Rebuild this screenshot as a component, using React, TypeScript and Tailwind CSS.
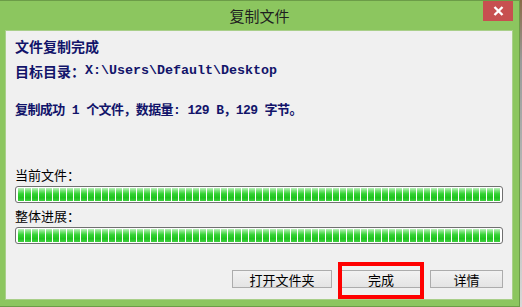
import React from "react";

const cjk = "font-['Noto_Sans_CJK_SC','Noto_Sans',sans-serif]";
const mono = "font-['Liberation_Mono','Noto_Sans_CJK_SC',monospace]";

function Bar() {
  return (
    <div className="w-[488px] h-[17px] border border-[#707070] rounded-[3px] bg-white px-[2px] py-[1px]">
      <div className="h-full w-full bg-[image:repeating-linear-gradient(to_right,transparent_0px,transparent_6px,#ffffff_6px,#ffffff_7px),linear-gradient(to_bottom,#bdf2bd_0%,#76e276_22%,#33d233_45%,#1fc41f_75%,#41cf41_100%)]" />
    </div>
  );
}

function Btn({ label, w }: { label: string; w: string }) {
  return (
    <div
      className={`${w} h-[18px] border border-[#acacac] bg-[linear-gradient(to_bottom,#f2f2f2,#e4e4e4)] flex items-center justify-center text-[13px] leading-none text-black ${cjk}`}
    >
      {label}
    </div>
  );
}

export default function App() {
  return (
    <div className="w-[522px] h-[307px] flex bg-[#cfcfcf] overflow-hidden">
      <div className="w-[520px] h-[307px] bg-[#8cc65f] border-t border-r border-b border-[#6c9c48] flex flex-col">
        {/* title bar */}
        <div className="relative h-[29px] flex items-center justify-center">
          <span className={`text-[15px] text-[#1f1f1f] ${cjk} pt-[1px]`}>复制文件</span>
          <div className="absolute right-[6px] top-0 w-[30px] h-[20px] bg-[#c75050] flex items-center justify-center">
            <svg width="11" height="10" viewBox="0 0 11 10">
              <path d="M1.5 1 L9.5 9 M9.5 1 L1.5 9" stroke="#ffffff" strokeWidth="2.4" />
            </svg>
          </div>
        </div>
        {/* content panel */}
        <div className="ml-[5px] w-[508px] h-[270px] bg-[#f0f0f0] border border-[#a9cf8a] flex flex-col px-[9px] pt-[5px]">
          <div className={`h-[20px] flex items-center text-[14px] font-bold text-[#12146a] ${cjk}`}>文件复制完成</div>
          <div className={`mt-[5px] h-[20px] flex items-center text-[14px] font-bold text-[#12146a] ${cjk}`}>
            <span>目标目录：</span>
            <span className={`${mono} text-[13.33px]`}>{"X:\\Users\\Default\\Desktop"}</span>
          </div>
          <div className={`mt-[20px] h-[20px] flex items-center text-[13px] font-bold text-[#12146a] whitespace-pre tracking-[-0.6px] ${mono}`}>
            复制成功 1 个文件，数据量: 129 B，129 字节。
          </div>
          <div className={`mt-[44px] h-[20px] flex items-center text-[13px] text-black ${cjk}`}>当前文件：</div>
          <div className="mt-[1px]">
            <Bar />
          </div>
          <div className={`mt-[3px] h-[20px] flex items-center text-[13px] text-black ${cjk}`}>整体进展：</div>
          <div className="mt-[1px]">
            <Bar />
          </div>
          <div className="mt-[26px] flex justify-end items-start w-[488px]">
            <Btn label="打开文件夹" w="w-[100px]" />
            <div className="relative ml-[9px]">
              <Btn label="完成" w="w-[80px]" />
              <div className="absolute -top-[8px] -left-[3px] -right-[3px] -bottom-[11px] border-4 border-[#ff0000]" />
            </div>
            <div className="ml-[9px]">
              <Btn label="详情" w="w-[73px]" />
            </div>
          </div>
        </div>
      </div>
      <div className="w-[2px] h-full bg-[linear-gradient(to_bottom,#8a6a48_0%,#9a9a9a_20%,#d8d8d8_100%)]" />
    </div>
  );
}
